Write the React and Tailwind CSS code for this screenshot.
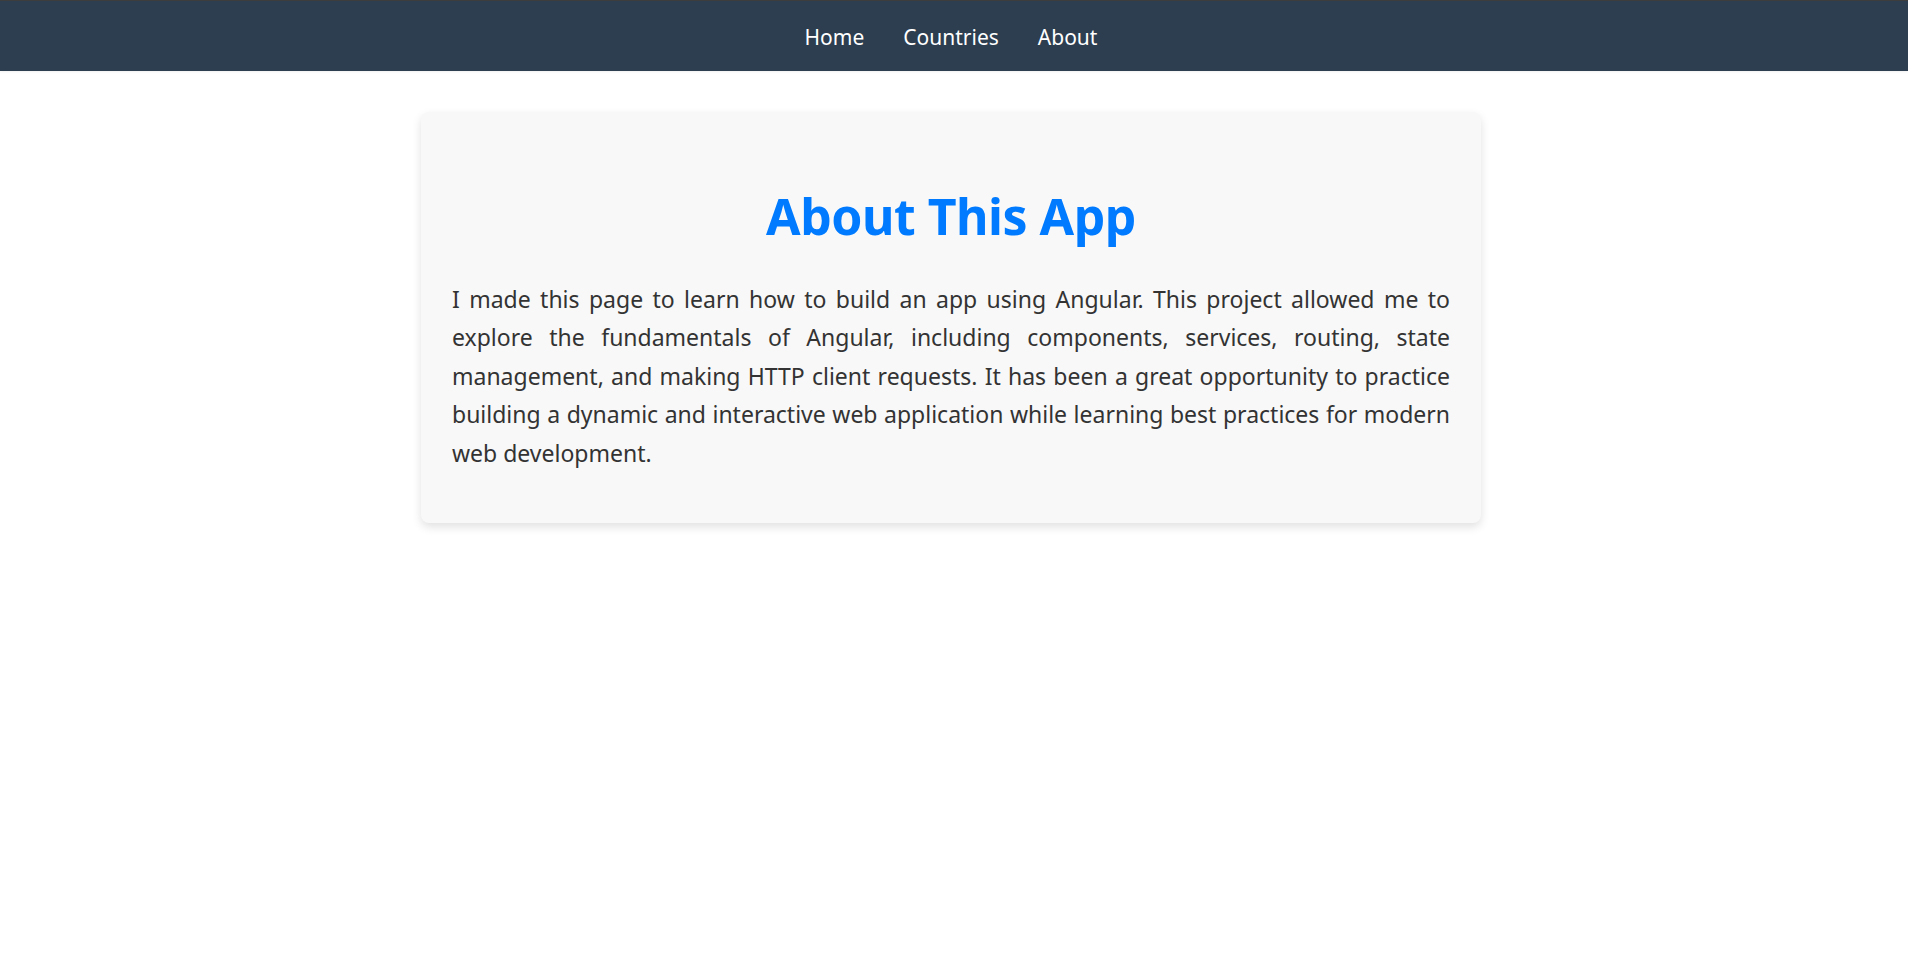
export default function App() {
  const links = ['Home', 'Countries', 'About'];

  return (
    <div className="min-h-screen bg-white" style={{ fontFamily: '"Noto Sans", "Open Sans", sans-serif' }}>
      <nav className="h-[71px] bg-[#2c3e50] border-t border-[#3d3d3d] flex items-center justify-center gap-[39px] pt-[2px] pr-[6px] shadow-[0_1px_2px_rgba(0,0,0,0.06)]">
        {links.map(link => (
          <a key={link} href="#" className="text-white text-[21px] leading-none">
            {link}
          </a>
        ))}
      </nav>

      <main className="pt-[41px] pr-[6px]">
        <div className="mx-auto max-w-[1060px] bg-[#f8f8f8] rounded-lg shadow-[0_4px_10px_rgba(0,0,0,0.12)] px-[31px] pt-[74px] pb-[51px]">
          <h1 className="text-center text-[#007bff] font-bold text-[50px] leading-[60px] tracking-[-0.01em] mb-[34px]">
            About This App
          </h1>
          <p className="text-[#333] text-[23px] leading-[38.4px] text-justify">
            I made this page to learn how to build an app using Angular. This project allowed me to explore the
            fundamentals of Angular, including components, services, routing, state management, and making HTTP
            client requests. It has been a great opportunity to practice building a dynamic and interactive web
            application while learning best practices for modern web development.
          </p>
        </div>
      </main>
    </div>
  );
}
